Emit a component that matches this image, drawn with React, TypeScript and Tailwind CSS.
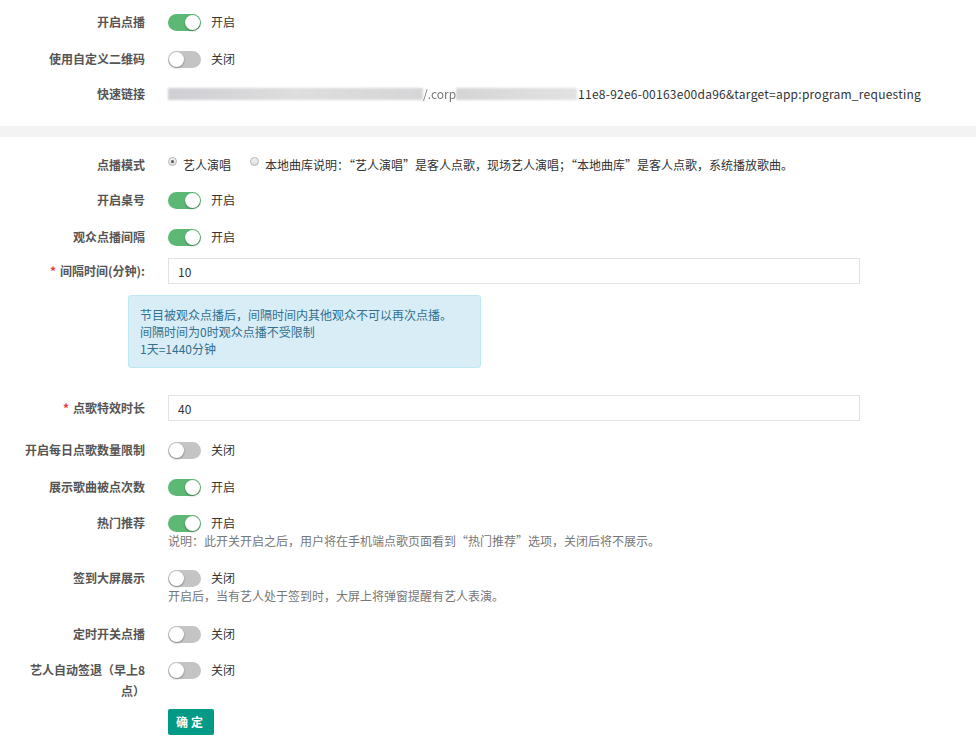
import { useState } from 'react'

const font = { fontFamily: '"Noto Sans CJK SC", "Noto Sans", sans-serif' }

function Toggle({ on }: { on: boolean }) {
  return (
    <div className="flex items-center gap-[10px]">
      <div
        className={`relative h-[17px] w-[33px] rounded-full ${on ? 'bg-[#5cb874]' : 'bg-[#c4c4c4]'}`}
      >
        <div
          className={`absolute top-[1px] h-[15px] w-[15px] rounded-full bg-white shadow-[0_1px_2px_rgba(0,0,0,0.35)] ${on ? 'right-[1px]' : 'left-[1px]'}`}
        />
      </div>
      <span className="text-[12px] text-[#333]">{on ? '开启' : '关闭'}</span>
    </div>
  )
}

function Row({
  label,
  required,
  children,
  className = '',
}: {
  label: string
  required?: boolean
  children: React.ReactNode
  className?: string
}) {
  return (
    <div className={`flex items-start ${className}`}>
      <div className="ml-[25px] w-[120px] shrink-0 text-right text-[12px] font-bold leading-[21px] text-[#555]">
        {required && <span className="mr-[4px] text-[#e4393c]">*</span>}
        {label}
      </div>
      <div className="ml-[23px] flex-1">{children}</div>
    </div>
  )
}

function Radio({ checked, label }: { checked: boolean; label: string }) {
  return (
    <label className="flex items-center gap-[6px]">
      <span className="relative -mt-[6px] flex h-[9px] w-[9px] items-center justify-center rounded-full border border-[#b5b5b5] bg-gradient-to-b from-[#f4f4f4] to-[#dcdcdc]">
        {checked && <span className="h-[3px] w-[3px] rounded-full bg-[#555]" />}
      </span>
      <span>{label}</span>
    </label>
  )
}

export default function App() {
  const [interval, setInterval] = useState('10')
  const [effect, setEffect] = useState('40')

  return (
    <div className="min-h-[747px] w-[976px] bg-white text-[12px] text-[#333]" style={font}>
      {/* 基本设置 */}
      <div className="pt-[11px] pb-[22px]">
        <Row label="开启点播">
          <div className="pt-[2px]"><Toggle on={true} /></div>
        </Row>
        <Row label="使用自定义二维码" className="mt-[16px]">
          <div className="pt-[2px]"><Toggle on={false} /></div>
        </Row>
        <Row label="快速链接" className="mt-[14px]">
          <div className="flex h-[21px] items-center">
            <div className="h-[12px] w-[255px] bg-gradient-to-r from-[#cfcfd4] via-[#dedede] to-[#d6d6d8] blur-[1px]" />
            <span className="text-[#777] blur-[0.6px]">/.corp</span>
            <div className="h-[12px] w-[121px] bg-gradient-to-r from-[#d4d4d6] via-[#dcdcdc] to-[#e2e2e2] blur-[1px]" />
            <span className="ml-[1px] whitespace-nowrap tracking-[0.25px]">11e8-92e6-00163e00da96&amp;target=app:program_requesting</span>
          </div>
        </Row>
      </div>

      <div className="h-[11px] bg-[#f3f3f3]" />

      {/* 点播设置 */}
      <div className="pt-[17px]">
        <Row label="点播模式">
          <div className="flex h-[21px] items-center">
            <Radio checked={true} label="艺人演唱" />
            <div className="ml-[19px]">
              <Radio checked={false} label="本地曲库说明：“艺人演唱”是客人点歌，现场艺人演唱；“本地曲库”是客人点歌，系统播放歌曲。" />
            </div>
          </div>
        </Row>
        <Row label="开启桌号" className="mt-[14px]">
          <div className="pt-[2px]"><Toggle on={true} /></div>
        </Row>
        <Row label="观众点播间隔" className="mt-[16px]">
          <div className="pt-[2px]"><Toggle on={true} /></div>
        </Row>

        <div className="mt-[11px] flex items-center">
          <div className="ml-[25px] w-[120px] shrink-0 text-right text-[12px] font-bold text-[#555]">
            <span className="mr-[4px] text-[#e4393c]">*</span>间隔时间(分钟):
          </div>
          <input
            value={interval}
            onChange={(e) => setInterval(e.target.value)}
            className="ml-[23px] h-[26px] w-[692px] border border-[#e2e2e2] px-[9px] text-[12px] text-[#333] outline-none"
          />
        </div>

        <div className="ml-[128px] mt-[11px] w-[353px] rounded-[3px] border border-[#bce8f1] bg-[#d9edf7] px-[11px] py-[10px] text-[12px] leading-[17px] text-[#31708f]">
          <div>节目被观众点播后，间隔时间内其他观众不可以再次点播。</div>
          <div>间隔时间为0时观众点播不受限制</div>
          <div>1天=1440分钟</div>
        </div>

        <div className="mt-[27px] flex items-center">
          <div className="ml-[25px] w-[120px] shrink-0 text-right text-[12px] font-bold text-[#555]">
            <span className="mr-[4px] text-[#e4393c]">*</span>点歌特效时长
          </div>
          <input
            value={effect}
            onChange={(e) => setEffect(e.target.value)}
            className="ml-[23px] h-[26px] w-[692px] border border-[#e2e2e2] px-[9px] text-[12px] text-[#333] outline-none"
          />
        </div>

        <Row label="开启每日点歌数量限制" className="mt-[18px]">
          <div className="pt-[2px]"><Toggle on={false} /></div>
        </Row>
        <Row label="展示歌曲被点次数" className="mt-[16px]">
          <div className="pt-[2px]"><Toggle on={true} /></div>
        </Row>
        <Row label="热门推荐" className="mt-[15px]">
          <div className="pt-[2px]"><Toggle on={true} /></div>
          <div className="leading-[18px] text-[#777]">
            说明：此开关开启之后，用户将在手机端点歌页面看到“热门推荐”选项，关闭后将不展示。
          </div>
        </Row>
        <Row label="签到大屏展示" className="mt-[17px]">
          <div className="pt-[2px]"><Toggle on={false} /></div>
          <div className="leading-[18px] text-[#777]">
            开启后，当有艺人处于签到时，大屏上将弹窗提醒有艺人表演。
          </div>
        </Row>
        <Row label="定时开关点播" className="mt-[18px]">
          <div className="pt-[2px]"><Toggle on={false} /></div>
        </Row>
        <Row label="艺人自动签退（早上8点）" className="mt-[15px]">
          <div className="pt-[2px]"><Toggle on={false} /></div>
        </Row>

        <div className="ml-[168px] mt-[8px] pb-[11px]">
          <button className="h-[26px] w-[46px] rounded-[2px] bg-[#009a87] text-[12px] font-bold tracking-[3px] text-white">
            确定
          </button>
        </div>
      </div>
    </div>
  )
}
